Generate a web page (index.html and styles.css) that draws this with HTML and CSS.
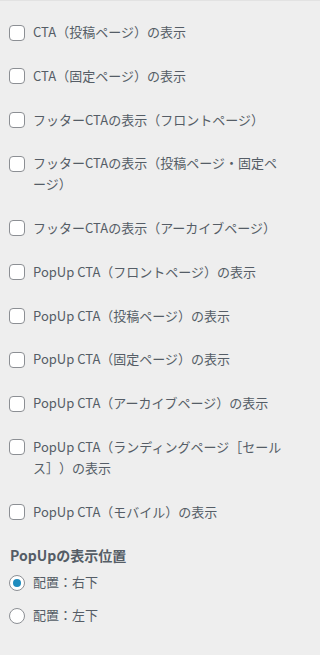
FILE: index.html
```html
<!DOCTYPE html>
<html lang="ja">
<head>
<meta charset="utf-8">
<title>CTA設定</title>
<link rel="stylesheet" href="styles.css">
</head>
<body>
<div class="panel">
  <ul class="options">
    <li class="item"><span class="check"></span><span class="label">CTA（投稿ページ）の表示</span></li>
    <li class="item"><span class="check"></span><span class="label">CTA（固定ページ）の表示</span></li>
    <li class="item"><span class="check"></span><span class="label">フッターCTAの表示（フロントページ）</span></li>
    <li class="item"><span class="check"></span><span class="label">フッターCTAの表示（投稿ページ・固定ページ）</span></li>
    <li class="item"><span class="check"></span><span class="label">フッターCTAの表示（アーカイブページ）</span></li>
    <li class="item"><span class="check"></span><span class="label">PopUp CTA（フロントページ）の表示</span></li>
    <li class="item"><span class="check"></span><span class="label">PopUp CTA（投稿ページ）の表示</span></li>
    <li class="item"><span class="check"></span><span class="label">PopUp CTA（固定ページ）の表示</span></li>
    <li class="item"><span class="check"></span><span class="label">PopUp CTA（アーカイブページ）の表示</span></li>
    <li class="item"><span class="check"></span><span class="label">PopUp CTA（ランディングページ［セールス］）の表示</span></li>
    <li class="item"><span class="check"></span><span class="label">PopUp CTA（モバイル）の表示</span></li>
  </ul>
  <h3 class="heading">PopUpの表示位置</h3>
  <ul class="radios">
    <li class="radio-item"><span class="radio radio-on"></span><span class="label">配置：右下</span></li>
    <li class="radio-item"><span class="radio"></span><span class="label">配置：左下</span></li>
  </ul>
</div>
</body>
</html>
```
FILE: styles.css
```css
html, body {
  margin: 0;
  padding: 0;
  background: #eeeeee;
}
body {
  font-family: "Noto Sans CJK JP", "Noto Sans", sans-serif;
  color: #555d66;
  font-size: 13px;
  border-top: 1px solid #e2e2e2;
  text-spacing-trim: space-all;
}
.panel {
  box-sizing: border-box;
  width: 294px;
  padding: 21px 7px 30px 9px;
}
.options, .radios {
  list-style: none;
  margin: 0;
  padding: 0;
}
.item {
  display: flex;
  gap: 8px;
  line-height: 20.8px;
  margin-bottom: 23px;
}
.check {
  flex: 0 0 auto;
  box-sizing: border-box;
  width: 16px;
  height: 16px;
  margin-top: 2.5px;
  background: #ffffff;
  border: 1px solid #8c8f94;
  border-radius: 4px;
}
.label {
  flex: 1 1 auto;
  min-width: 0;
  line-break: loose;
}
.heading {
  margin: 0 0 6px 1px;
  font-size: 14px;
  line-height: 21px;
  font-weight: 700;
  color: #555d66;
}
.radio-item {
  display: flex;
  gap: 8px;
  line-height: 20.8px;
  margin-bottom: 12px;
}
.radio {
  flex: 0 0 auto;
  box-sizing: border-box;
  width: 16px;
  height: 16px;
  margin-top: 2.5px;
  background: #ffffff;
  border: 1px solid #8c8f94;
  border-radius: 50%;
  display: flex;
  align-items: center;
  justify-content: center;
}
.radio-on::after {
  content: "";
  width: 8px;
  height: 8px;
  border-radius: 50%;
  background: #1e8cbe;
}
```
